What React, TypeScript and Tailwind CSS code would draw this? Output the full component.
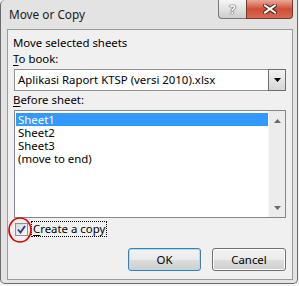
import React from "react";

function ArrowUp() {
  return (
    <svg width="7" height="4" viewBox="0 0 7 4">
      <path d="M0 4 L3.5 0 L7 4 Z" fill="#6a6a6a" />
    </svg>
  );
}
function ArrowDown({ color = "#6a6a6a" }: { color?: string }) {
  return (
    <svg width="7" height="4" viewBox="0 0 7 4">
      <path d="M0 0 L7 0 L3.5 4 Z" fill={color} />
    </svg>
  );
}

export default function App() {
  return (
    <div className="w-[299px] h-[286px] bg-[#f4f4f4] font-['Noto_Sans',sans-serif] text-[11.4px] leading-[16px] text-black">
      <div className="w-[298px] h-[284px] bg-[#e3e3e3] border-x border-b border-[#6b6b6b] rounded-b-[5px] rounded-tl-[5px] flex flex-col">
        {/* Title bar */}
        <div className="h-[29px] flex justify-between items-start pl-[8px] pr-[4px]">
          <div className="mt-[6px] text-[#1a1a1a] text-[11.8px]">Move or Copy</div>
          <div className="flex h-[19px]">
            <div className="w-[28px] h-[19px] border-l border-b border-[#7a7a7a] rounded-bl-[4px] bg-gradient-to-b from-[#f6f6f6] via-[#e2e2e2] to-[#cdcdcd] flex items-center justify-center">
              <span className="text-[13px] leading-[13px] font-bold text-white [text-shadow:0_0_1px_#444,0_0_1px_#444,0_0_1px_#444]">?</span>
            </div>
            <div className="w-[47px] h-[19px] border-x border-b border-[#6d3a30] rounded-br-[4px] bg-gradient-to-b from-[#e9a898] via-[#cf4d37] to-[#d86a52] flex items-center justify-center">
              <svg width="14" height="10" viewBox="0 0 14 10">
                <path d="M2 1.5 L12 8.5 M12 1.5 L2 8.5" stroke="#4a2a24" strokeWidth="4" strokeLinecap="square" />
                <path d="M2 1.5 L12 8.5 M12 1.5 L2 8.5" stroke="#ffffff" strokeWidth="2" strokeLinecap="square" />
              </svg>
            </div>
          </div>
        </div>
        {/* Client panel */}
        <div className="ml-[6px] mr-[4px] h-[251px] border border-[#9a9a9a] bg-[#f0f0f0] flex flex-col pl-[5px] pr-[6px] pt-[5px]">
          <div>Move selected sheets</div>
          <div>
            <span className="underline underline-offset-2">T</span>o book:
          </div>
          <div className="ml-[1px] mt-[2px] h-[22px] flex border-y border-l border-[#8e8f8f] bg-white">
            <div className="flex-1 pl-[3px] leading-[20px]">Aplikasi Raport KTSP (versi 2010).xlsx</div>
            <div className="w-[18px] h-[22px] -mt-[1px] border border-[#6e6e6e] bg-gradient-to-b from-[#f2f2f2] to-[#d6d6d6] flex items-center justify-center">
              <ArrowDown color="#000000" />
            </div>
          </div>
          <div className="mt-[1px]">
            <span className="underline underline-offset-2">B</span>efore sheet:
          </div>
          <div className="ml-[1px] mt-[2px] h-[108px] border border-[#828790] bg-white flex">
            <div className="flex-1 pl-[1px] pt-[2px] leading-[13px]">
              <div className="h-[13px] bg-[#3399ff] text-white pl-[2px]">Sheet1</div>
              <div className="h-[13px] pl-[2px]">Sheet2</div>
              <div className="h-[13px] pl-[2px]">Sheet3</div>
              <div className="h-[13px] pl-[2px]">(move to end)</div>
            </div>
            <div className="w-[17px] bg-[#ececec] border-l border-[#f8f8f8] flex flex-col justify-between">
              <div className="h-[17px] flex items-center justify-center pt-[3px]">
                <ArrowUp />
              </div>
              <div className="h-[17px] flex items-center justify-center pb-[2px]">
                <ArrowDown />
              </div>
            </div>
          </div>
          <div className="mt-[3px] h-[16px] flex items-center relative">
            <div className="ml-[2px] w-[13px] h-[13px] border border-[#8f8f8f] bg-gradient-to-br from-[#d8d8d8] to-[#fbfbfb] flex items-center justify-center">
              <svg width="9" height="9" viewBox="0 0 9 9">
                <path d="M1 4.5 L3.5 7.5 L8 1" fill="none" stroke="#233e8b" strokeWidth="1.8" />
              </svg>
            </div>
            <div className="ml-[3px] h-[16px] border border-dotted border-black px-[1px] leading-[14px]">
              <span className="underline underline-offset-2">C</span>reate a copy
            </div>
            <svg className="absolute left-[-5px] top-[-4px]" width="24" height="26" viewBox="0 0 24 26">
              <ellipse cx="12" cy="13" rx="11" ry="12" fill="none" stroke="#e00000" strokeWidth="1.6" />
            </svg>
          </div>
          <div className="mt-[11px] flex justify-end gap-[11px] pr-[0px]">
            <div className="w-[73px] h-[23px] rounded-[3px] border border-[#3c7fb1] shadow-[inset_0_0_0_1px_#a9dcf5] bg-[linear-gradient(#f2f2f2_0%,#ebebeb_50%,#dddddd_50%,#cfcfcf_100%)] flex items-center justify-center">
              OK
            </div>
            <div className="w-[74px] h-[23px] rounded-[3px] border border-[#707070] shadow-[inset_0_0_0_1px_#fcfcfc] bg-[linear-gradient(#f2f2f2_0%,#ebebeb_50%,#dddddd_50%,#cfcfcf_100%)] flex items-center justify-center">
              Cancel
            </div>
          </div>
        </div>
      </div>
    </div>
  );
}
